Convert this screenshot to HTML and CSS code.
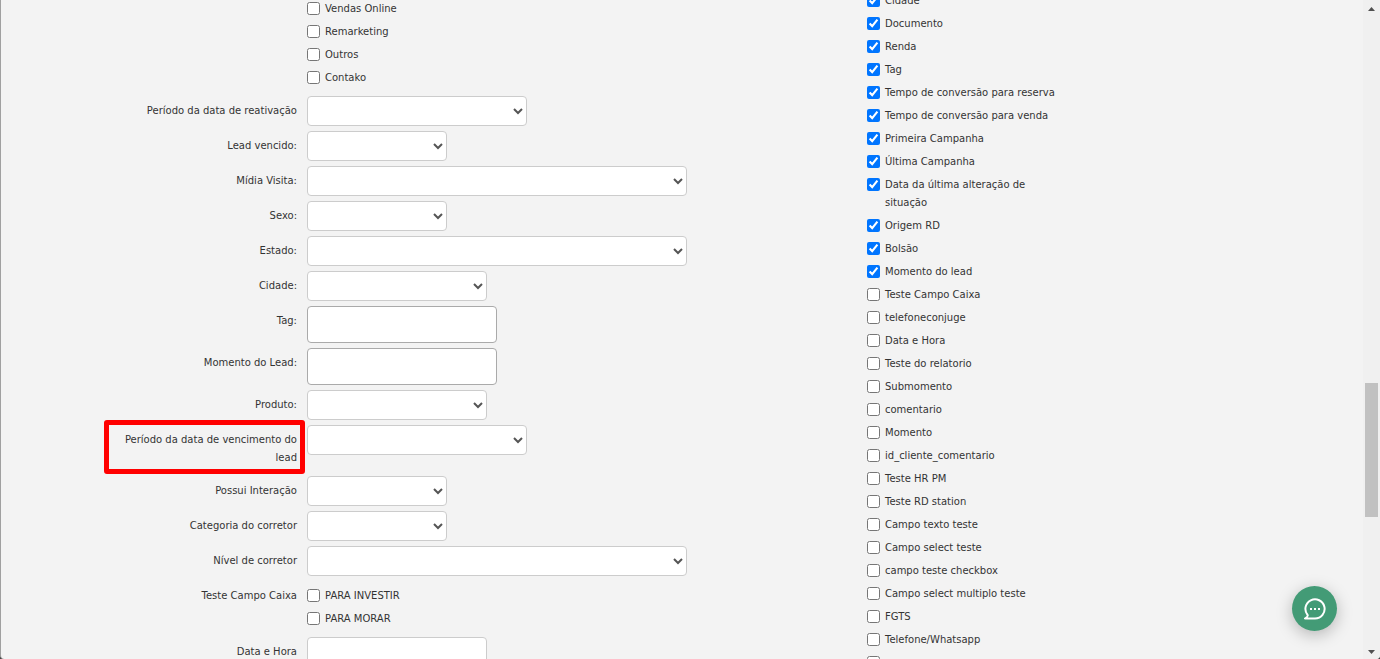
FILE: index.html
```
<!DOCTYPE html>
<html lang="pt-br">
<head>
  <meta charset="UTF-8">
  <meta name="viewport" content="width=device-width, initial-scale=1.0">
  <title>Relatório de Leads</title>
  <link rel="stylesheet" href="styles.css">
</head>
<body>
  <div class="janela">
    <form class="filtros" action="#">
      <!-- filtros -->
      <div class="campos">
        <fieldset class="linha" aria-label="Origem">
          <div class="rotulo"></div>
          <div class="opcoes">
            <label><input type="checkbox" name="origem">Vendas Online</label>
            <label><input type="checkbox" name="origem">Remarketing</label>
            <label><input type="checkbox" name="origem">Outros</label>
            <label><input type="checkbox" name="origem">Contako</label>
          </div>
        </fieldset>
        <div class="linha">
          <label class="rotulo" for="reativacao">Período da data de reativação</label>
          <select id="reativacao" class="medio"><option></option></select>
        </div>
        <div class="linha">
          <label class="rotulo" for="vencido">Lead vencido:</label>
          <select id="vencido" class="mini"><option></option></select>
        </div>
        <div class="linha">
          <label class="rotulo" for="midia">Mídia Visita:</label>
          <select id="midia" class="grande"><option></option></select>
        </div>
        <div class="linha">
          <label class="rotulo" for="sexo">Sexo:</label>
          <select id="sexo" class="mini"><option></option></select>
        </div>
        <div class="linha">
          <label class="rotulo" for="estado">Estado:</label>
          <select id="estado" class="grande"><option></option></select>
        </div>
        <div class="linha">
          <label class="rotulo" for="cidade">Cidade:</label>
          <select id="cidade" class="pequeno"><option></option></select>
        </div>
        <div class="linha">
          <label class="rotulo" for="tag">Tag:</label>
          <input type="text" id="tag" class="multiplo">
        </div>
        <div class="linha">
          <label class="rotulo" for="momento">Momento do Lead:</label>
          <input type="text" id="momento" class="multiplo">
        </div>
        <div class="linha">
          <label class="rotulo" for="produto">Produto:</label>
          <select id="produto" class="pequeno"><option></option></select>
        </div>
        <div class="linha">
          <label class="rotulo destaque" for="vencimento">Período da data de vencimento do lead</label>
          <select id="vencimento" class="medio"><option></option></select>
        </div>
        <div class="linha">
          <label class="rotulo" for="interacao">Possui Interação</label>
          <select id="interacao" class="mini"><option></option></select>
        </div>
        <div class="linha">
          <label class="rotulo" for="categoria">Categoria do corretor</label>
          <select id="categoria" class="mini"><option></option></select>
        </div>
        <div class="linha">
          <label class="rotulo" for="nivel">Nível de corretor</label>
          <select id="nivel" class="grande"><option></option></select>
        </div>
        <fieldset class="linha" aria-labelledby="caixa">
          <div class="rotulo" id="caixa">Teste Campo Caixa</div>
          <div class="opcoes">
            <label><input type="checkbox" name="caixa">PARA INVESTIR</label>
            <label><input type="checkbox" name="caixa">PARA MORAR</label>
          </div>
        </fieldset>
        <div class="linha">
          <label class="rotulo" for="datahora">Data e Hora</label>
          <input type="text" id="datahora" class="pequeno">
        </div>
      </div>

      <!-- colunas do relatório -->
      <div class="colunas">
        <label><input type="checkbox" checked>Cidade</label>
        <label><input type="checkbox" checked>Documento</label>
        <label><input type="checkbox" checked>Renda</label>
        <label><input type="checkbox" checked>Tag</label>
        <label><input type="checkbox" checked>Tempo de conversão para reserva</label>
        <label><input type="checkbox" checked>Tempo de conversão para venda</label>
        <label><input type="checkbox" checked>Primeira Campanha</label>
        <label><input type="checkbox" checked>Última Campanha</label>
        <label><input type="checkbox" checked>Data da última alteração de situação</label>
        <label><input type="checkbox" checked>Origem RD</label>
        <label><input type="checkbox" checked>Bolsão</label>
        <label><input type="checkbox" checked>Momento do lead</label>
        <label><input type="checkbox">Teste Campo Caixa</label>
        <label><input type="checkbox">telefoneconjuge</label>
        <label><input type="checkbox">Data e Hora</label>
        <label><input type="checkbox">Teste do relatorio</label>
        <label><input type="checkbox">Submomento</label>
        <label><input type="checkbox">comentario</label>
        <label><input type="checkbox">Momento</label>
        <label><input type="checkbox">id_cliente_comentario</label>
        <label><input type="checkbox">Teste HR PM</label>
        <label><input type="checkbox">Teste RD station</label>
        <label><input type="checkbox">Campo texto teste</label>
        <label><input type="checkbox">Campo select teste</label>
        <label><input type="checkbox">campo teste checkbox</label>
        <label><input type="checkbox">Campo select multiplo teste</label>
        <label><input type="checkbox">FGTS</label>
        <label><input type="checkbox">Telefone/Whatsapp</label>
        <label><input type="checkbox" aria-label="Campo"></label>
      </div>
    </form>

    <!-- barra de rolagem -->
    <div class="rolagem" aria-hidden="true">
      <svg width="7" height="4" viewBox="0 0 7 4"><path d="M0 4L3.5 0L7 4z"/></svg>
      <div class="trilho"><div class="polegar"></div></div>
      <svg width="7" height="4" viewBox="0 0 7 4"><path d="M0 0L3.5 4L7 0z"/></svg>
    </div>
  </div>

  <button type="button" class="chat" aria-label="Abrir chat">
    <svg width="23" height="23" viewBox="0 0 23 23" fill="none">
      <path d="M2 21.5H12A9.6 9.6 0 1 0 4.6 18Q5.4 19.4 2 21.5z" stroke="#fff" stroke-width="2" stroke-linejoin="round"/>
      <path d="M7 11h2v2h-2zM11 11h2v2h-2zM15 11h2v2h-2z" fill="#fff"/>
    </svg>
  </button>
</body>
</html>
```

FILE: styles.css
```
* {
  box-sizing: border-box;
}
body {
  margin: 0;
  height: 100vh;
  overflow: hidden;
  background-color: #444;
  color: #333;
  font-family: Verdana, "DejaVu Sans", sans-serif;
  font-size: 10px;
  line-height: 18px;
}
.janela {
  display: flex;
  height: 100%;
  overflow: hidden;
  background-color: #f3f3f3;
  border-left: 1px solid #a0a0a0;
  border-radius: 0 0 4px 4px;
}

/* formulario */
.filtros {
  flex: 1;
  display: grid;
  grid-template-columns: minmax(0, 1fr) 496px;
  align-items: start;
  margin-top: -8px;
}
.campos {
  padding: 2px 0 0 116px;
}
.linha {
  display: flex;
  align-items: flex-start;
  gap: 10px;
  margin: 0 0 5px;
  padding: 0;
  border: none;
}
.rotulo {
  position: relative;
  flex: none;
  width: 180px;
  padding: 6px 0 4px;
  text-align: right;
}
.destaque::before {
  content: "";
  position: absolute;
  inset: -5px -8px -3px -13px;
  border: 5px solid #f00;
  border-radius: 3px;
}
select,
input[type=text] {
  height: 30px;
  margin: 0;
  padding: 4px 6px;
  background-color: #fff;
  border: 1px solid #ccc;
  border-radius: 4px;
  color: #555;
  font: inherit;
}
.mini {
  width: 140px;
}
.pequeno {
  width: 180px;
}
.medio {
  width: 220px;
}
.grande {
  width: 380px;
}
input.multiplo {
  width: 190px;
  height: 37px;
  border-color: #aaa;
}

/* checkbox */
.opcoes,
.colunas {
  display: flex;
  flex-direction: column;
  gap: 5px;
}
.opcoes {
  padding: 6px 0 4px;
}
.opcoes label,
.colunas label {
  display: flex;
  align-items: flex-start;
  gap: 5px;
}
.colunas label {
  width: 200px;
  min-height: 18px;
}
input[type=checkbox] {
  flex: none;
  width: 13px;
  height: 13px;
  margin: 2px 0 0;
}

/* rolagem */
.rolagem {
  display: flex;
  flex-direction: column;
  align-items: center;
  width: 17px;
  padding: 7px 0 5px;
  background-color: #f0f0f0;
}
.rolagem svg {
  fill: #505050;
}
.trilho {
  flex: 1;
  display: flex;
  flex-direction: column;
  width: 13px;
}
.trilho::before {
  content: "";
  flex: 372;
}
.trilho::after {
  content: "";
  flex: 133;
}
.polegar {
  flex: 134;
  background-color: #c1c1c1;
}

/* chat */
.chat {
  position: fixed;
  right: 43px;
  bottom: 28px;
  display: flex;
  align-items: center;
  justify-content: center;
  width: 45px;
  height: 45px;
  padding: 0;
  background-color: #439b76;
  border: none;
  border-radius: 50%;
  box-shadow: 0 4px 16px rgba(0, 0, 0, 0.25);
}
```
